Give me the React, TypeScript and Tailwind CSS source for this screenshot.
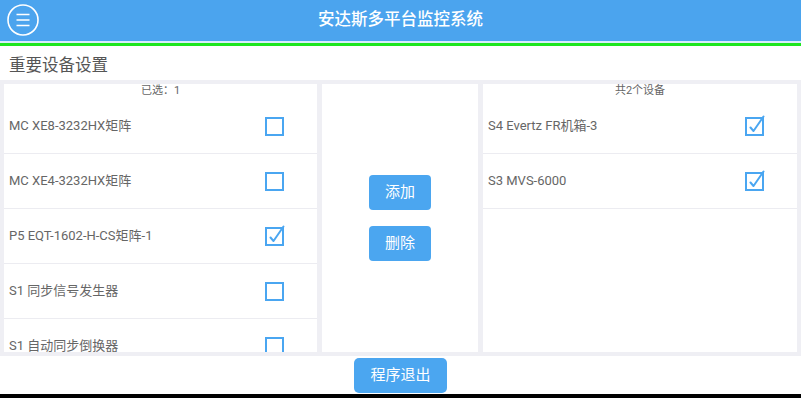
import React from "react";

const font = { fontFamily: "Roboto, 'Noto Sans CJK SC', sans-serif" };

function CheckBox({ checked }: { checked: boolean }) {
  return (
    <svg width="22" height="22" viewBox="0 0 22 22" className="shrink-0">
      <rect x="2" y="3" width="17" height="17" fill="none" stroke="#4aa6f1" strokeWidth="2" />
      {checked && (
        <path d="M6.5 12.5 L9.5 16 L19.5 1.5" fill="none" stroke="#4aa6f1" strokeWidth="2" strokeLinecap="round" strokeLinejoin="round" />
      )}
    </svg>
  );
}

function Row({ label, checked }: { label: string; checked: boolean }) {
  return (
    <div className="flex h-[55px] shrink-0 items-center justify-between border-b border-[#ececf1] pl-[5px] pr-[31px]">
      <span className="text-[13px] text-[#666]">{label}</span>
      <CheckBox checked={checked} />
    </div>
  );
}

export default function App() {
  const left = [
    { label: "MC XE8-3232HX矩阵", checked: false },
    { label: "MC XE4-3232HX矩阵", checked: false },
    { label: "P5 EQT-1602-H-CS矩阵-1", checked: true },
    { label: "S1 同步信号发生器", checked: false },
    { label: "S1 自动同步倒换器", checked: false },
  ];
  const right = [
    { label: "S4 Evertz FR机箱-3", checked: true },
    { label: "S3 MVS-6000", checked: true },
  ];
  return (
    <div className="flex h-[398px] w-[801px] flex-col bg-black" style={font}>
      <div className="flex h-[394px] flex-col bg-white">
        <div className="relative flex h-[41px] shrink-0 items-center justify-center bg-[#4ba4ee]">
          <svg width="32" height="32" viewBox="0 0 32 32" className="absolute left-[7px] top-[4px]">
            <circle cx="16" cy="16" r="15" fill="none" stroke="#fff" strokeWidth="1.6" />
            <path d="M9.5 10.5 H22.5 M9.5 16 H22.5 M9.5 21.5 H22.5" stroke="#fff" strokeWidth="1.6" />
          </svg>
          <span className="text-[16.5px] font-medium text-white">安达斯多平台监控系统</span>
        </div>
        <div className="h-[2px] shrink-0 bg-[#d8ecfb]" />
        <div className="h-[3px] shrink-0 bg-[#1ee61e]" />
        <div className="flex h-[34px] shrink-0 items-end pb-[1px] pl-[9px]">
          <span className="text-[16.5px] text-[#555]">重要设备设置</span>
        </div>
        <div className="flex h-[276px] shrink-0 gap-[5px] bg-[#efeff4] px-[4px] pb-[4px] pt-[4px]">
          <div className="flex w-[313px] flex-col overflow-hidden bg-white">
            <div className="flex h-[15px] shrink-0 items-center justify-center text-[11px] text-[#666]">已选：1</div>
            {left.map((r) => (
              <Row key={r.label} {...r} />
            ))}
          </div>
          <div className="flex w-[156px] flex-col items-center justify-center gap-[16px] bg-white">
            <button className="flex h-[35px] w-[62px] items-center justify-center rounded-[4px] bg-[#4ba6f0] text-[15px] text-white">添加</button>
            <button className="flex h-[35px] w-[62px] items-center justify-center rounded-[4px] bg-[#4ba6f0] text-[15px] text-white">删除</button>
          </div>
          <div className="flex w-[314px] flex-col overflow-hidden bg-white">
            <div className="flex h-[15px] shrink-0 items-center justify-center text-[11px] text-[#666]">共2个设备</div>
            {right.map((r) => (
              <Row key={r.label} {...r} />
            ))}
          </div>
        </div>
        <div className="flex flex-1 items-center justify-center">
          <button className="flex h-[35px] w-[93px] items-center justify-center rounded-[5px] bg-[#4ba6f0] text-[15px] text-white">程序退出</button>
        </div>
      </div>
    </div>
  );
}
